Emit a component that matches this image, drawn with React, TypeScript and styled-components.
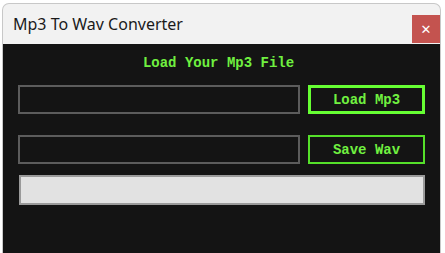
import styled, { createGlobalStyle } from "styled-components";

const GlobalStyle = createGlobalStyle`
    html, body {
        margin: 0;
        padding: 0;
        background: #ffffff;
        overflow: hidden;
    }
`;

const Desktop = styled.div`
    width: 445px;
    height: 253px;
    padding: 3px 4px 0 2px;
    box-sizing: border-box;
    background: #ffffff;
`;

const Window = styled.div`
    height: 250px;
    display: flex;
    flex-direction: column;
    border: 1px solid #c8c8c8;
    border-bottom: none;
    border-radius: 7px 7px 0 0;
    overflow: hidden;
    background: #f2f2f2;
`;

const TitleBar = styled.div`
    height: 40px;
    display: flex;
    align-items: center;
    justify-content: space-between;
    padding-left: 10px;
    flex-shrink: 0;
`;

const TitleText = styled.span`
    font-family: "Noto Sans", "Open Sans", sans-serif;
    font-size: 16px;
    color: #1a1a1a;
`;

const CloseButton = styled.div`
    width: 28px;
    height: 28px;
    margin-top: 10px;
    background: #c4534f;
    color: #ffffff;
    display: flex;
    align-items: center;
    justify-content: center;
    font-family: "DejaVu Sans", sans-serif;
    font-size: 13px;
`;

const Client = styled.div`
    flex: 1;
    background: #141414;
    padding: 10px 15px 0 15px;
    display: flex;
    flex-direction: column;
`;

const Heading = styled.div`
    font-family: "Liberation Mono", "DejaVu Sans Mono", monospace;
    font-weight: bold;
    font-size: 14px;
    color: #70f040;
    text-align: center;
    height: 18px;
    line-height: 18px;
    margin-right: 6px;
`;

const Row = styled.div<{ $top: number }>`
    display: grid;
    grid-template-columns: 282px 117px;
    column-gap: 8px;
    margin-top: ${(p) => p.$top}px;
`;

const PathBox = styled.div`
    height: 29px;
    box-sizing: border-box;
    border: 2px solid #5c5c5c;
    background: #141414;
`;

const GreenButton = styled.div<{ $focused?: boolean }>`
    height: 29px;
    box-sizing: border-box;
    border: ${(p) => (p.$focused ? "3px solid #66ff33" : "2px solid #55e02a")};
    background: #141414;
    color: #70f040;
    font-family: "Liberation Mono", "DejaVu Sans Mono", monospace;
    font-weight: bold;
    font-size: 14px;
    display: flex;
    align-items: center;
    justify-content: center;
`;

const Progress = styled.div`
    height: 30px;
    box-sizing: border-box;
    margin-top: 11px;
    margin-left: 1px;
    width: 406px;
    border: 2px solid #9a9a9a;
    background: #e2e2e2;
`;

export default function App() {
    return (
        <Desktop>
            <GlobalStyle />
            <Window>
                <TitleBar>
                    <TitleText>Mp3 To Wav Converter</TitleText>
                    <CloseButton>✕</CloseButton>
                </TitleBar>
                <Client>
                    <Heading>Load Your Mp3 File</Heading>
                    <Row $top={13}>
                        <PathBox />
                        <GreenButton $focused>Load Mp3</GreenButton>
                    </Row>
                    <Row $top={21}>
                        <PathBox />
                        <GreenButton>Save Wav</GreenButton>
                    </Row>
                    <Progress />
                </Client>
            </Window>
        </Desktop>
    );
}
